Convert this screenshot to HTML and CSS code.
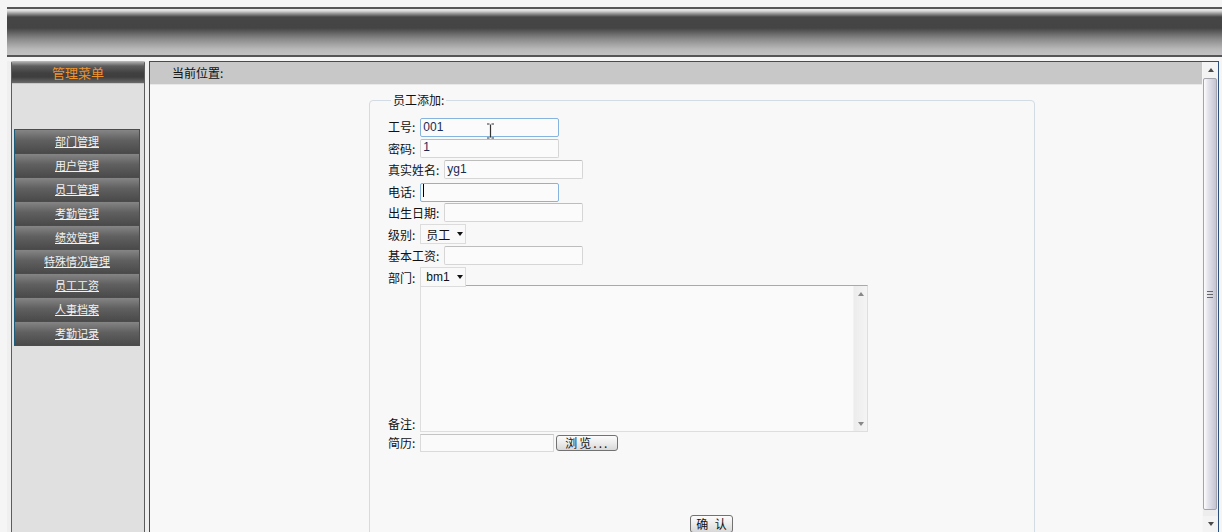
FILE: index.html
```html
<!DOCTYPE html>
<html lang="zh-CN">
<head>
    <meta charset="UTF-8">
    <meta name="viewport" content="width=device-width, initial-scale=1.0">
    <title>员工添加</title>
    <link rel="stylesheet" href="styles.css">
</head>
<body>
    <div class="header"></div>
    <div class="main">
        <div class="menu-panel">
            <div class="menu-box">
                <div class="menu-title">管理菜单</div>
                <ul class="menu-list">
                    <li><a href="#">部门管理</a></li>
                    <li><a href="#">用户管理</a></li>
                    <li><a href="#">员工管理</a></li>
                    <li><a href="#">考勤管理</a></li>
                    <li><a href="#">绩效管理</a></li>
                    <li><a href="#">特殊情况管理</a></li>
                    <li><a href="#">员工工资</a></li>
                    <li><a href="#">人事档案</a></li>
                    <li><a href="#">考勤记录</a></li>
                </ul>
            </div>
        </div>
        <div class="frame">
            <div class="frame-body">
                <div class="location">当前位置:</div>
                <div class="page">
                    <fieldset class="form-box">
                        <legend>员工添加:</legend>
                        <div class="row">
                            <label>工号:</label>
                            <span class="field">
                                <input class="text focus" type="text" value="001">
                                <!-- mouse pointer sitting over the field -->
                                <svg class="ibeam" width="9" height="16" viewBox="0 0 9 16">
                                    <path d="M1 1h2.5M5.5 1H8M4.5 1.5v13M1 15h2.5M5.5 15H8" stroke="#333" stroke-width="1.2" fill="none"/>
                                </svg>
                            </span>
                        </div>
                        <div class="row">
                            <label>密码:</label>
                            <input class="text" type="text" value="1">
                        </div>
                        <div class="row">
                            <label>真实姓名:</label>
                            <input class="text" type="text" value="yg1">
                        </div>
                        <div class="row">
                            <label>电话:</label>
                            <span class="field">
                                <input class="text focus" type="text" value="">
                                <span class="caret"></span>
                            </span>
                        </div>
                        <div class="row">
                            <label>出生日期:</label>
                            <input class="text" type="text" value="">
                        </div>
                        <div class="row">
                            <label>级别:</label>
                            <span class="select">
                                <select><option>员工</option></select>
                            </span>
                        </div>
                        <div class="row">
                            <label>基本工资:</label>
                            <input class="text" type="text" value="">
                        </div>
                        <div class="row">
                            <label>部门:</label>
                            <span class="select">
                                <select class="latin"><option>bm1</option></select>
                            </span>
                        </div>
                        <div class="row-note">
                            <label>备注:</label>
                            <div class="note-box">
                                <textarea></textarea>
                                <div class="note-scroll">
                                    <span class="tri-up"></span>
                                    <span class="tri-down"></span>
                                </div>
                            </div>
                        </div>
                        <div class="row-file">
                            <label>简历:</label>
                            <input class="file-text" type="text" value="">
                            <button class="btn btn-browse">浏览...</button>
                        </div>
                        <div class="actions">
                            <button class="btn btn-ok">确 认</button>
                        </div>
                    </fieldset>
                </div>
            </div>
            <div class="vscroll">
                <div class="sb-btn"><span class="tri-up"></span></div>
                <div class="sb-thumb"><span class="grip"></span></div>
                <div class="sb-btn"><span class="tri-down"></span></div>
            </div>
        </div>
    </div>
</body>
</html>
```

FILE: styles.css
```css
html{
    margin: 0;
    padding: 0;
}
body{
    margin: 7px 0 0 7px;
    height: 525px;
    overflow: hidden;
    background-color: #f5f5f5;
    font-family: "Noto Sans CJK SC", "Liberation Sans", sans-serif;
    font-size: 12px;
    color: #111;
}
.header{
    height: 50px;
    background: linear-gradient(#575757 0, #575757 2px, #ececec 2px, #d8d8d8 4px, #8c8c8c 7px, #464646 10px, #444 21px, #8a8a8a 32px, #b8b8b8 42px, #c2c2c2 48px, #555 48px, #555 50px);
}
.main{
    display: flex;
    margin-top: 4px;
    margin-right: 3px;
    height: 471px;
}

/* left menu */
.menu-panel{
    width: 142px;
    flex-shrink: 0;
    box-sizing: border-box;
    padding: 0 4px;
    background-color: #efefef;
}
.menu-box{
    height: 100%;
    box-sizing: border-box;
    border: 1px solid #5c5c5c;
    border-top-color: #b4b4b4;
    border-bottom: 0;
    border-radius: 2px 2px 0 0;
    background-color: #e0e0e0;
}
.menu-title{
    height: 22px;
    line-height: 22px;
    text-align: center;
    font-size: 13px;
    color: #ee942f;
    background: linear-gradient(#a8a8a8 0, #5e5e5e 4px, #404040 11px, #3e3e3e 15px, #6a6a6a 21px, #c8c8c8 21px);
}
.menu-list{
    list-style: none;
    margin: 45px 4px 0 2px;
    padding: 0;
}
.menu-list li{
    height: 23px;
    line-height: 23px;
    margin-top: -1px;
    border: 1px solid #1d5b78;
    text-align: center;
    font-size: 11px;
    background: linear-gradient(#858585, #606060 45%, #4a4a4a);
}
.menu-list li:first-child{
    margin-top: 0;
}
.menu-list a{
    color: #f2f2f2;
    text-decoration: underline;
}

/* right frame */
.frame{
    flex: 1;
    display: flex;
    border: 1px solid #2c4f7c;
    border-bottom: 0;
    background-color: #f8f8f8;
}
.frame-body{
    flex: 1;
    min-width: 0;
    overflow: hidden;
}
.location{
    height: 22px;
    line-height: 22px;
    padding-left: 22px;
    background-color: #c8c8c8;
    border-bottom: 1px solid #e8e8e8;
}
.vscroll{
    width: 15px;
    display: flex;
    flex-direction: column;
    background-color: #ededed;
    border-left: 1px solid #f6f6f6;
}
.sb-btn{
    height: 16px;
    display: flex;
    align-items: center;
    justify-content: center;
    background-color: #f3f3f3;
}
.sb-thumb{
    flex: 1;
    display: flex;
    align-items: center;
    justify-content: center;
    margin: 0 1px 6px 0;
    border: 1px solid #a4a4ac;
    border-radius: 2px;
    background: linear-gradient(90deg, #fdfdfd, #e6e6ee 30%, #d2d2de 70%, #c4c4d0);
}
.grip{
    width: 6px;
    height: 5px;
    border-top: 1px solid #666;
    border-bottom: 1px solid #666;
    position: relative;
}
.grip::after{
    content: "";
    position: absolute;
    left: 0;
    right: 0;
    top: 2px;
    border-top: 1px solid #666;
}
.tri-up, .tri-down{
    width: 0;
    height: 0;
    border-left: 3px solid transparent;
    border-right: 3px solid transparent;
}
.tri-up{
    border-bottom: 4px solid #4a4a4a;
}
.tri-down{
    border-top: 4px solid #4a4a4a;
}

/* form */
.form-box{
    margin: 8px 0 0 219px;
    width: 666px;
    height: 520px;
    box-sizing: border-box;
    border: 1px solid #d3dbe4;
    border-radius: 4px;
    padding: 9px 18px 0;
}
.form-box legend{
    margin-left: 3px;
    padding: 0 2px;
    line-height: 14px;
}
.row{
    display: flex;
    align-items: center;
    height: 21.5px;
}
.row label, .row-note label, .row-file label{
    margin-right: 5px;
    white-space: nowrap;
}
.field{
    position: relative;
    display: inline-block;
}
.text{
    width: 139px;
    height: 19px;
    box-sizing: border-box;
    border: 1px solid #d6d6d6;
    border-top-color: #bdbdbd;
    border-radius: 2px;
    padding: 0 2px 2px;
    background-color: #fbfbfb;
    font-family: "Liberation Sans", sans-serif;
    font-size: 12px;
    color: #1a2a55;
}
.text.focus{
    border-color: #86b4de;
}
.ibeam{
    position: absolute;
    left: 66px;
    top: 6px;
}
.caret{
    position: absolute;
    left: 3px;
    top: 3px;
    width: 1px;
    height: 13px;
    background-color: #000;
}
.select{
    position: relative;
    display: inline-block;
}
.select select{
    appearance: none;
    -webkit-appearance: none;
    width: 46px;
    height: 20px;
    margin: 0;
    padding: 0 0 0 5px;
    border: 1px solid #dcdcdc;
    border-radius: 0;
    background-color: #f9f9f9;
    font-family: "Noto Sans CJK SC", sans-serif;
    font-size: 12px;
    color: #111;
}
.select select.latin{
    font-family: "Liberation Sans", sans-serif;
}
.select::after{
    content: "";
    position: absolute;
    right: 3px;
    top: 8px;
    border-left: 3.5px solid transparent;
    border-right: 3.5px solid transparent;
    border-top: 4px solid #111;
}
.row-note{
    display: flex;
    align-items: flex-end;
    margin-top: -3px;
}
.note-box{
    display: flex;
    width: 448px;
    height: 147px;
    box-sizing: border-box;
    border: 1px solid #dedede;
    border-top-color: #a9a9a9;
    background-color: #fafafa;
}
.note-box textarea{
    flex: 1;
    border: 0;
    resize: none;
    background: transparent;
    outline: none;
}
.note-scroll{
    width: 13px;
    display: flex;
    flex-direction: column;
    align-items: center;
    justify-content: space-between;
    padding: 6px 0 5px;
    border-left: 1px solid #f2f2f2;
    background: linear-gradient(90deg, #ececec, #f4f4f4);
}
.note-scroll .tri-up{
    border-bottom-color: #888;
}
.note-scroll .tri-down{
    border-top-color: #888;
}
.row-file{
    display: flex;
    align-items: center;
    height: 19px;
    margin-top: 1px;
}
.file-text{
    width: 134px;
    height: 18px;
    box-sizing: border-box;
    border: 1px solid #dadada;
    border-top-color: #c4c4c4;
    background-color: #fafafa;
}
.btn{
    box-sizing: border-box;
    padding: 0;
    border: 1px solid #727272;
    border-radius: 3px;
    background: linear-gradient(#fcfcfc, #ececec 50%, #d8d8d8);
    font-family: "Noto Sans CJK SC", sans-serif;
    font-size: 12px;
    color: #111;
    line-height: 14px;
}
.btn-browse{
    width: 62px;
    height: 16px;
    margin-left: 2px;
    letter-spacing: 2px;
}
.actions{
    margin-top: 63px;
    padding-left: 302px;
}
.btn-ok{
    width: 43px;
    height: 18px;
    word-spacing: 4px;
}
```
